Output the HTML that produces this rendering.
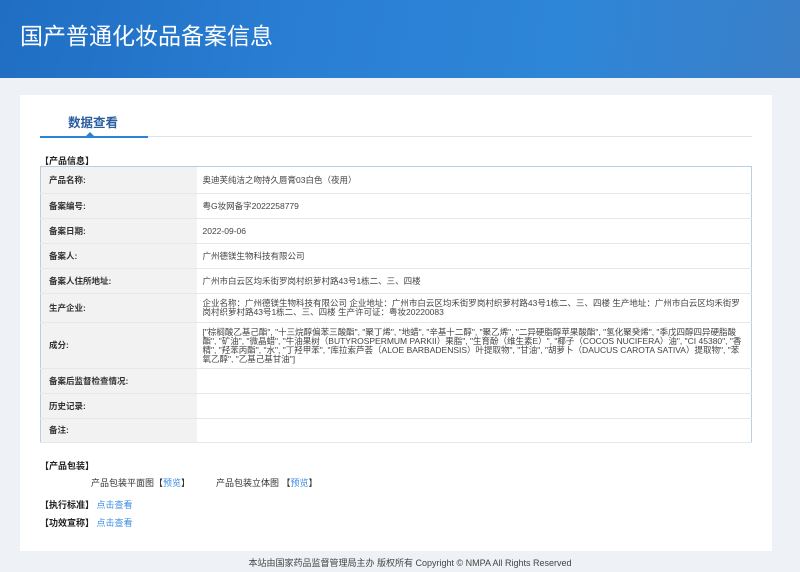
<!DOCTYPE html>
<html><head><meta charset="utf-8"><style>
*{margin:0;padding:0;box-sizing:border-box}
body{width:800px;height:572px;overflow:hidden;background:#eef1f5;font-family:"Liberation Sans","Noto Sans CJK SC",sans-serif;font-size:9px;color:#333;position:relative}
.hdr{position:absolute;left:0;top:0;width:800px;height:78px;background:linear-gradient(100deg,#1f6ec3 0%,#2a7fd4 40%,#2e86d8 70%,#3a7fc8 100%)}
.hdr h1{position:absolute;left:20px;top:17px;font-size:23px;font-weight:normal;color:#fff}
.panel{position:absolute;left:20px;top:95px;width:752px;height:456px;background:#fff}
.tab{position:absolute;left:48px;top:17px;font-size:12.5px;font-weight:bold;color:#2a5d9f}
.tl{position:absolute;left:20px;top:41px;width:712px;height:1px;background:#dde3ea}
.tb{position:absolute;left:20px;top:41px;width:108px;height:2px;background:#2c83d6}
.tri{position:absolute;left:66px;top:37px;width:0;height:0;border-left:4px solid transparent;border-right:4px solid transparent;border-bottom:4px solid #2c83d6}
.sec{position:absolute;font-weight:bold;font-size:9px;color:#222}
table{position:absolute;left:20px;top:71px;width:712px;border-collapse:collapse;border:1px solid #b9cde3}
td{border-bottom:1px solid #e3e8ee;font-size:8.5px;line-height:9px;padding:0 6px}
td.l{width:156px;background:#f2f2f2;font-weight:bold;padding-left:8px;color:#333}
td.v{color:#444}
.lk{color:#3a8ee6}
.ft{position:absolute;left:0;top:556px;width:800px;text-align:center;font-size:9px;color:#444;padding-left:20px}
</style></head><body>
<div class="hdr"><h1>国产普通化妆品备案信息</h1></div>
<div class="panel">
<div class="tab">数据查看</div>
<div class="tl"></div><div class="tb"></div><div class="tri"></div>
<div class="sec" style="left:20px;top:59px">【产品信息】</div>
<table>
<tr style="height:27px"><td class="l">产品名称:</td><td class="v">奥迪芙纯洁之吻持久唇膏03白色（夜用）</td></tr>
<tr style="height:25px"><td class="l">备案编号:</td><td class="v">粤G妆网备字2022258779</td></tr>
<tr style="height:25px"><td class="l">备案日期:</td><td class="v">2022-09-06</td></tr>
<tr style="height:25px"><td class="l">备案人:</td><td class="v">广州德镁生物科技有限公司</td></tr>
<tr style="height:25px"><td class="l">备案人住所地址:</td><td class="v">广州市白云区均禾街罗岗村织萝村路43号1栋二、三、四楼</td></tr>
<tr style="height:29px"><td class="l">生产企业:</td><td class="v">企业名称：广州德镁生物科技有限公司 企业地址：广州市白云区均禾街罗岗村织萝村路43号1栋二、三、四楼 生产地址：广州市白云区均禾街罗岗村织萝村路43号1栋二、三、四楼 生产许可证：粤妆20220083</td></tr>
<tr style="height:46px"><td class="l">成分:</td><td class="v">["棕榈酸乙基己酯", "十三烷醇偏苯三酸酯", "聚丁烯", "地蜡", "辛基十二醇", "聚乙烯", "二异硬脂醇苹果酸酯", "氢化聚癸烯", "季戊四醇四异硬脂酸酯", "矿油", "微晶蜡", "牛油果树（BUTYROSPERMUM PARKII）果脂", "生育酚（维生素E）", "椰子（COCOS NUCIFERA）油", "CI 45380", "香精", "羟苯丙酯", "水", "丁羟甲苯", "库拉索芦荟（ALOE BARBADENSIS）叶提取物", "甘油", "胡萝卜（DAUCUS CAROTA SATIVA）提取物", "苯氧乙醇", "乙基己基甘油"]</td></tr>
<tr style="height:25px"><td class="l">备案后监督检查情况:</td><td class="v"></td></tr>
<tr style="height:25px"><td class="l">历史记录:</td><td class="v"></td></tr>
<tr style="height:24px"><td class="l">备注:</td><td class="v"></td></tr>
</table>
<div class="sec" style="left:20px;top:364px">【产品包装】</div>
<div style="position:absolute;left:71px;top:381px">产品包装平面图【<span class="lk">预览</span>】</div>
<div style="position:absolute;left:196px;top:381px">产品包装立体图 【<span class="lk">预览</span>】</div>
<div class="sec" style="left:20px;top:403px">【执行标准】 <span class="lk" style="font-weight:normal">点击查看</span></div>
<div class="sec" style="left:20px;top:421px">【功效宣称】 <span class="lk" style="font-weight:normal">点击查看</span></div>
</div>
<div class="ft">本站由国家药品监督管理局主办 版权所有 Copyright © NMPA All Rights Reserved</div>
</body></html>
